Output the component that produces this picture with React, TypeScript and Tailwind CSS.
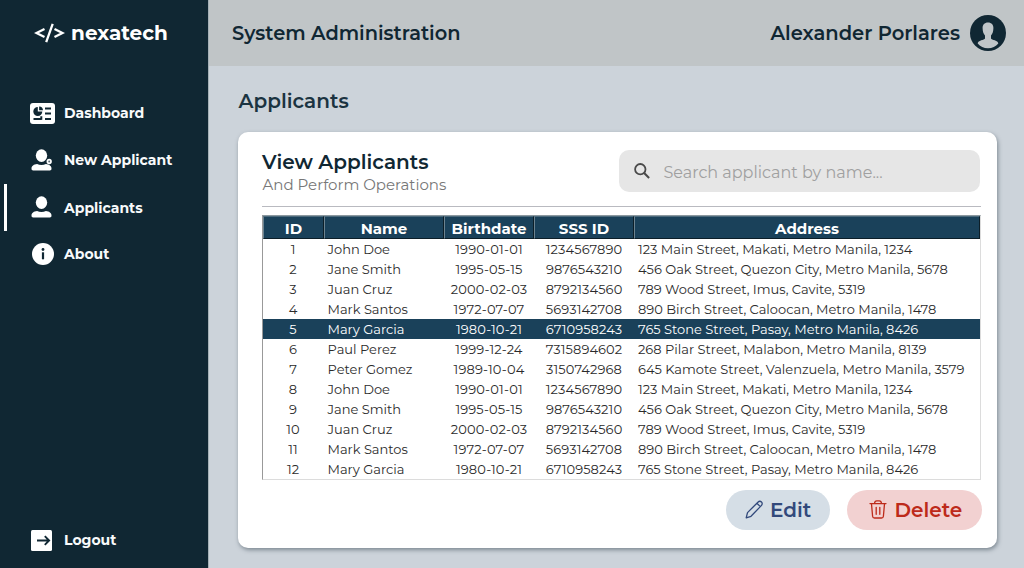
import React from "react";

type Applicant = { id: number; name: string; birthdate: string; sss: string; address: string };

const people = [
  { name: "John Doe", birthdate: "1990-01-01", sss: "1234567890", address: "123 Main Street, Makati, Metro Manila, 1234" },
  { name: "Jane Smith", birthdate: "1995-05-15", sss: "9876543210", address: "456 Oak Street, Quezon City, Metro Manila, 5678" },
  { name: "Juan Cruz", birthdate: "2000-02-03", sss: "8792134560", address: "789 Wood Street, Imus, Cavite, 5319" },
  { name: "Mark Santos", birthdate: "1972-07-07", sss: "5693142708", address: "890 Birch Street, Caloocan, Metro Manila, 1478" },
  { name: "Mary Garcia", birthdate: "1980-10-21", sss: "6710958243", address: "765 Stone Street, Pasay, Metro Manila, 8426" },
  { name: "Paul Perez", birthdate: "1999-12-24", sss: "7315894602", address: "268 Pilar Street, Malabon, Metro Manila, 8139" },
  { name: "Peter Gomez", birthdate: "1989-10-04", sss: "3150742968", address: "645 Kamote Street, Valenzuela, Metro Manila, 3579" },
];

const applicants: Applicant[] = [...people, ...people.slice(0, 5)].map((p, i) => ({ id: i + 1, ...p }));

const columns = "grid grid-cols-[61px_120px_90px_100px_346px]";

function DashboardIcon() {
  return (
    <svg width="25" height="21" viewBox="0 0 25 21">
      <rect width="25" height="21" rx="3" fill="#fff" />
      <path d="M7.800 4a4.500 4.500 0 1 0 4.500 4.500H7.800z" fill="#102733" />
      <path d="M9.100 3.400a4 4 0 0 1 3.900 3.800H9.100z" fill="#102733" />
      <path d="M15 5.500h6M15 10.500h6M15 16h6M3.500 16h8M11.300 13.300v3.500" stroke="#102733" strokeWidth="2" />
    </svg>
  );
}

function PersonIcon({ badge = false }: { badge?: boolean }) {
  return (
    <svg width="22" height="22" viewBox="0 0 22 22" fill="#fff" className="mb-[2px] ml-px">
      <ellipse cx="10.500" cy="6.600" rx="5.700" ry="6.300" />
      <path d="M.5 19.500c0-2.600 2.400-4.200 5.600-4.500 2.600 1.400 6.200 1.400 8.800 0 3.200.3 5.600 1.900 5.600 4.500 0 1.400-.6 1.900-1.700 1.900H2.200C1.100 21.400.5 20.900.5 19.500z" />
      {badge && <circle cx="18.200" cy="12.500" r="1.800" fill="#5b6b73" stroke="#fff" strokeWidth="1.700" />}
    </svg>
  );
}

function InfoIcon() {
  return (
    <svg width="22" height="22" viewBox="0 0 22 22" className="mb-[2px] ml-[1.500px]">
      <circle cx="11" cy="11" r="11" fill="#fff" />
      <circle cx="11" cy="6.500" r="1.400" fill="#102733" />
      <path d="M11 9.300v7" stroke="#102733" strokeWidth="2.200" />
    </svg>
  );
}

function LogoutIcon() {
  return (
    <svg width="21" height="21" viewBox="0 0 21 21" className="ml-px">
      <rect width="21" height="21" rx="1.500" fill="#fff" />
      <path d="M6 10.500h12M13.800 6.200l4.300 4.300-4.300 4.300" fill="none" stroke="#102733" strokeWidth="1.900" />
    </svg>
  );
}

function AvatarIcon() {
  return (
    <svg width="36" height="36" viewBox="0 0 36 36">
      <circle cx="18" cy="18" r="18" fill="#102733" />
      <path
        d="M18 7.500c-3.500 0-5.600 2.300-5.400 5.800.1 3 .8 5.600 2.400 7.300v2.800c-.4 1.500-7.300 1.700-7.300 5.100 2.500 3 6 4.700 10.300 4.700s7.800-1.700 10.300-4.700c0-3.400-6.900-3.600-7.300-5.100v-2.800c1.600-1.700 2.300-4.300 2.400-7.300.2-3.500-1.900-5.800-5.400-5.800z"
        fill="#c0c5c8"
      />
    </svg>
  );
}

function SearchIcon() {
  return (
    <svg width="16" height="16" viewBox="0 0 16 16" fill="none" stroke="#4a4a4a" strokeWidth="1.800">
      <circle cx="6.300" cy="6.200" r="5.200" />
      <path d="M9.900 9.800l5.200 5.200" strokeWidth="2.100" />
    </svg>
  );
}

function PencilIcon() {
  return (
    <svg width="19" height="19" viewBox="0 0 19 19" fill="none" stroke="#32497b" strokeWidth="1.300" strokeLinejoin="round">
      <path d="M1.200 17.800l1.300-5.200L12.900 2.200c1.100-1.100 2.600-1.200 3.600-.2s.9 2.500-.2 3.600L6 16.300zM11.900 3.200l3.400 3.400" />
    </svg>
  );
}

function TrashIcon() {
  return (
    <svg width="18" height="19" viewBox="0 0 18 19" fill="none" stroke="#bd2a1a" strokeWidth="1.300" strokeLinejoin="round" strokeLinecap="round">
      <path d="M1 3.600h16M5.500 3.500c.2-1.800 1-2.700 2.200-2.700h2.600c1.200 0 2 .9 2.200 2.700M2.500 3.900l1.100 12.300c.1 1.200.8 1.800 1.900 1.800h7c1.100 0 1.800-.6 1.900-1.800l1.100-12.300M7.200 7.300v7M10.800 7.300v7" />
    </svg>
  );
}

function NavItem({ icon, label, active = false }: { icon: React.ReactNode; label: string; active?: boolean }) {
  return (
    <a className="flex h-[47px] items-center">
      <span className={`ml-1 h-[47px] w-[3px] ${active ? "bg-white" : ""}`} />
      <span className="ml-[23px] flex w-[34px] justify-start">{icon}</span>
      <span className={`text-[14px] font-bold text-[#f8fafb] ${active ? "pt-[2px]" : ""}`}>{label}</span>
    </a>
  );
}

function HeaderCell({ children }: { children: React.ReactNode }) {
  return (
    <div className="flex h-[23px] items-center justify-center border border-t-[#4d6b7d] border-r-[#0c1e28] border-b-[#0c1e28] border-l-[#6c8390] bg-[#1a415a] pt-[3px] text-[15px] leading-[18px] font-bold text-white">
      {children}
    </div>
  );
}

export default function App() {
  return (
    <div className="flex h-[568px] w-[1024px] overflow-hidden bg-[#ccd3da] font-['Montserrat','Inter',sans-serif] whitespace-nowrap">
      <aside className="flex w-[208px] shrink-0 flex-col bg-[#102733]">
        <div className="flex h-[66px] items-center pl-[34px] text-white">
          <svg width="31" height="20" viewBox="0 0 31 20" fill="none" stroke="#fff" strokeWidth="2.300">
            <path d="M10.500 6L2.500 10l8 4M20.500 6l8 4-8 4M18.700.8l-6.500 18.400" />
          </svg>
          <span className="ml-[6px] text-[20px] font-bold">nexatech</span>
        </div>
        <nav className="mt-6 flex flex-col">
          <NavItem icon={<DashboardIcon />} label="Dashboard" />
          <NavItem icon={<PersonIcon badge />} label="New Applicant" />
          <NavItem icon={<PersonIcon />} label="Applicants" active />
          <NavItem icon={<InfoIcon />} label="About" />
        </nav>
        <div className="mt-auto mb-1">
          <NavItem icon={<LogoutIcon />} label="Logout" />
        </div>
      </aside>

      <div className="flex w-[816px] flex-col border-l border-[#a5b0b6]">
        <header className="flex h-[66px] shrink-0 items-center justify-between bg-[#c0c5c7] pr-[18px] pl-[23px] font-semibold text-[#102733]">
          <h1 className="pt-px text-[19.400px]">System Administration</h1>
          <div className="flex items-center gap-[10px]">
            <span className="pt-px text-[19.500px]">Alexander Porlares</span>
            <AvatarIcon />
          </div>
        </header>

        <main className="flex flex-col pl-[28.500px]">
          <h2 className="mt-5 pl-px text-[20px] leading-[30px] font-semibold text-[#1b3341]">Applicants</h2>
          <section className="mt-[15.500px] h-[416.500px] w-[759px] rounded-[10px] bg-white pt-[19px] pr-4 pl-[24.500px] shadow-[1px_2px_4px_rgba(60,75,85,0.55)]">
            <div className="flex h-[56px] justify-between border-b border-[#b9bac0]">
              <div>
                <h3 className="text-[20px] leading-[22px] font-semibold text-[#102733]">View Applicants</h3>
                <p className="pl-[0.500px] text-[15px] leading-[23px] text-[#777]">And Perform Operations</p>
              </div>
              <label className="mr-px -mt-[0.500px] flex h-[42px] w-[361px] items-center rounded-[10px] bg-[#e6e6e6] pl-[15px]">
                <SearchIcon />
                <span className="ml-[14px] pt-[3px] text-[16px] text-[#a0a0a0]">Search applicant by name...</span>
              </label>
            </div>

            <div className="mt-2 h-[265px] w-[719px] border border-t-[#8b989f] border-r-[#dcdcdc] border-b-[#dcdcdc] border-l-[#999]">
              <div className={`${columns} h-[23px]`}>
                <HeaderCell>ID</HeaderCell>
                <HeaderCell>Name</HeaderCell>
                <HeaderCell>Birthdate</HeaderCell>
                <HeaderCell>SSS ID</HeaderCell>
                <HeaderCell>Address</HeaderCell>
              </div>
              {applicants.map((a) => (
                <div
                  key={a.id}
                  className={`${columns} h-5 items-center pt-px text-[13px] leading-[19px] ${a.id === 5 ? "bg-[#1a415a] text-white" : "text-[#2b2b2b]"}`}
                >
                  <span className="pr-px text-center">{a.id}</span>
                  <span className="pl-[3.500px]">{a.name}</span>
                  <span className="text-center tracking-[0.15px]">{a.birthdate}</span>
                  <span className="text-center tracking-[0.1px]">{a.sss}</span>
                  <span className="pl-[4px]">{a.address}</span>
                </div>
              ))}
            </div>

            <div className="mt-[10px] flex justify-end gap-[17px] text-[20px] font-semibold">
              <button className="flex h-10 w-[103.500px] items-center rounded-full bg-[#d5dee6] pl-[19px] text-[#32497b]">
                <PencilIcon />
                <span className="ml-[6px]">Edit</span>
              </button>
              <button className="-mr-[1px] flex h-10 w-[135px] items-center rounded-full bg-[#f2d1d1] pl-[22px] text-[#bd2a1a]">
                <TrashIcon />
                <span className="ml-[8px]">Delete</span>
              </button>
            </div>
          </section>
        </main>
      </div>
    </div>
  );
}
